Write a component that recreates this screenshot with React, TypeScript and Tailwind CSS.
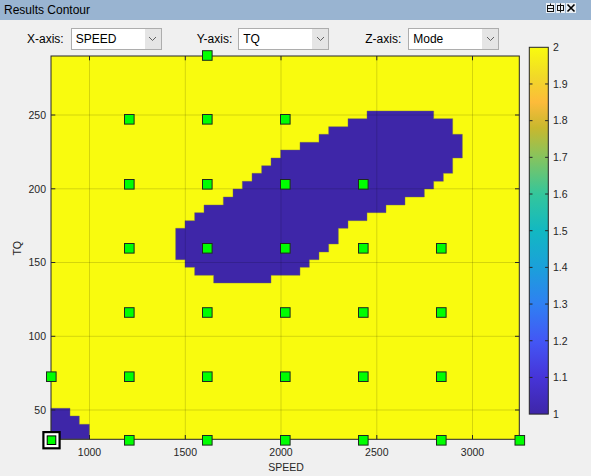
import React from 'react'

const FONT = 'Liberation Sans, Arial, sans-serif'

// blob outline, traced in 3x crop coords starting at (160,100)
const blobZoom: [number, number][] = [
  [621, 33], [821, 33], [821, 56], [878, 56], [878, 103], [907, 103], [907, 174], [878, 174],
  [878, 220], [850, 220], [850, 244], [821, 244], [821, 267], [793, 267], [793, 291], [735, 291],
  [735, 315], [678, 315], [678, 338], [621, 338], [621, 362], [564, 362], [564, 385], [535, 385],
  [535, 432], [506, 432], [506, 456], [477, 456], [477, 479], [448, 479], [448, 502], [420, 502],
  [420, 526], [333, 526], [333, 549], [161, 549], [161, 526], [104, 526], [104, 502], [75, 502],
  [75, 479], [47, 479], [47, 385], [75, 385], [75, 362], [104, 362], [104, 338], [132, 338],
  [132, 315], [190, 315], [190, 291], [219, 291], [219, 267], [247, 267], [247, 244], [276, 244],
  [276, 220], [305, 220], [305, 197], [333, 197], [333, 174], [362, 174], [362, 150], [420, 150],
  [420, 127], [477, 127], [477, 103], [506, 103], [506, 80], [564, 80], [564, 56], [621, 56],
]
const blobPoints = blobZoom.map(([x, y]) => `${160 + x / 3},${100 + y / 3}`).join(' ')
const cornerPoints = '51,408.3 70,408.3 70,416 79.3,416 79.3,424.3 89.3,424.3 89.3,439 51,439'

const xTicks = [
  { v: '1000', x: 89.5 },
  { v: '1500', x: 185.3 },
  { v: '2000', x: 281 },
  { v: '2500', x: 376.8 },
  { v: '3000', x: 472.5 },
]
const yTicks = [
  { v: '250', y: 115 },
  { v: '200', y: 188.8 },
  { v: '150', y: 262.5 },
  { v: '100', y: 336.3 },
  { v: '50', y: 410 },
]

const colX = [51.3, 129.3, 207.3, 285.3, 363.3, 441.3, 519.8]
const markers: [number, number][] = [
  [207.3, 55.5],
  [129.3, 119.3], [207.3, 119.3], [285.3, 119.3],
  [129.3, 184.3], [207.3, 184.3], [285.3, 184.3], [363.3, 184.3],
  ...[1, 2, 3, 4, 5].map((i) => [colX[i], 248.3] as [number, number]),
  ...[1, 2, 3, 4, 5].map((i) => [colX[i], 312.5] as [number, number]),
  ...[0, 1, 2, 3, 4, 5].map((i) => [colX[i], 376.7] as [number, number]),
  ...[1, 2, 3, 4, 5, 6].map((i) => [colX[i], 440.3] as [number, number]),
]

const cbLabels = ['2', '1.9', '1.8', '1.7', '1.6', '1.5', '1.4', '1.3', '1.2', '1.1', '1']

function Chevron() {
  return (
    <svg width="9" height="6" viewBox="0 0 9 6">
      <path d="M1 1 L4.5 4.5 L8 1" fill="none" stroke="#606060" strokeWidth="1" />
    </svg>
  )
}

function Combo({ value }: { value: string }) {
  return (
    <div className="w-[91px] h-[22px] bg-white border border-[#adadad] flex">
      <span className="flex-1 pl-[4px] leading-[20px]">{value}</span>
      <div className="w-[16px] bg-[#e5e5e5] flex items-center justify-center">
        <Chevron />
      </div>
    </div>
  )
}

function Plot() {
  return (
    <svg width="591" height="427" viewBox="0 49 591 427" fontFamily={FONT} className="overflow-visible shrink-0">
      <defs>
        <linearGradient id="parula" x1="0" y1="1" x2="0" y2="0">
          <stop offset="0" stopColor="#3e26a8" />
          <stop offset="0.1" stopColor="#4634d8" />
          <stop offset="0.2" stopColor="#4357f5" />
          <stop offset="0.3" stopColor="#2f80f2" />
          <stop offset="0.4" stopColor="#1ba0da" />
          <stop offset="0.5" stopColor="#12b8c2" />
          <stop offset="0.6" stopColor="#34c69b" />
          <stop offset="0.7" stopColor="#86c45e" />
          <stop offset="0.78" stopColor="#c8b82e" />
          <stop offset="0.85" stopColor="#fdbb3a" />
          <stop offset="0.92" stopColor="#f1d928" />
          <stop offset="1" stopColor="#f9fb0e" />
        </linearGradient>
      </defs>

      <rect x="51" y="56" width="468.3" height="383.3" fill="#f9fb0e" />
      <polygon points={blobPoints} fill="#3e26a8" stroke="#6e6a5a" strokeOpacity="0.55" strokeWidth="0.8" />
      <polygon points={cornerPoints} fill="#3e26a8" stroke="#6e6a5a" strokeOpacity="0.55" strokeWidth="0.8" />

      {xTicks.map((t) => (
        <line key={t.v} x1={t.x} y1="56" x2={t.x} y2="439.3" stroke="#000" strokeOpacity="0.15" />
      ))}
      {yTicks.map((t) => (
        <line key={t.v} x1="51" y1={t.y} x2="519.3" y2={t.y} stroke="#000" strokeOpacity="0.15" />
      ))}

      {/* tick marks */}
      {xTicks.map((t) => (
        <g key={t.v} stroke="#262626">
          <line x1={t.x} y1="439.3" x2={t.x} y2="435" />
          <line x1={t.x} y1="56" x2={t.x} y2="60.3" />
        </g>
      ))}
      {yTicks.map((t) => (
        <g key={t.v} stroke="#262626">
          <line x1="51" y1={t.y} x2="55.3" y2={t.y} />
          <line x1="519.3" y1={t.y} x2="515" y2={t.y} />
        </g>
      ))}

      <rect x="51" y="56" width="468.3" height="383.3" fill="none" stroke="#262626" strokeWidth="1" />

      {xTicks.map((t) => (
        <text key={t.v} x={t.x} y="455.8" fontSize="10.5" fill="#262626" textAnchor="middle">
          {t.v}
        </text>
      ))}
      {yTicks.map((t) => (
        <text key={t.v} x="46" y={t.y + 3.8} fontSize="10.5" fill="#262626" textAnchor="end">
          {t.v}
        </text>
      ))}

      <text x="286" y="471" fontSize="10.5" fill="#262626" textAnchor="middle">
        SPEED
      </text>
      <text x="21.5" y="248.3" fontSize="10.5" fill="#262626" textAnchor="middle" transform="rotate(-90 21.5 248.3)">
        TQ
      </text>

      {/* selected point */}
      <rect x="42.3" y="431" width="18.4" height="18.4" fill="#000" />
      <rect x="44.5" y="433.2" width="14" height="14" fill="#fff" />

      {markers.map(([x, y], i) => (
        <rect key={i} x={x - 4.8} y={y - 4.8} width="9.6" height="9.6" fill="#00ff00" stroke="#1e2a1e" strokeWidth="1" />
      ))}
      <rect x={51.5 - 4.3} y={440.2 - 4.3} width="8.6" height="8.6" fill="#00ff00" stroke="#000" strokeWidth="1" />

      {/* colorbar */}
      <rect x="529.3" y="47.3" width="19" height="366.8" fill="url(#parula)" stroke="#262626" strokeWidth="1" />
      {cbLabels.map((l, i) => {
        const y = 47.3 + i * 36.68
        return (
          <g key={l}>
            {i > 0 && i < 10 && (
              <g stroke="#262626">
                <line x1="529.3" y1={y} x2="532.5" y2={y} />
                <line x1="548.3" y1={y} x2="545.1" y2={y} />
              </g>
            )}
            <text x="553" y={y + 3.8} fontSize="10.5" fill="#262626">
              {l}
            </text>
          </g>
        )
      })}
    </svg>
  )
}

function TitleButtons() {
  return (
    <div className="flex gap-[1px] self-start mt-[3px]">
      <svg width="9" height="10" viewBox="0 0 9 10">
        <rect width="9" height="10" fill="#e9eef4" />
        <rect x="1.5" y="2.5" width="6" height="6" fill="none" stroke="#111" />
        <line x1="1.5" y1="5.5" x2="7.5" y2="5.5" stroke="#111" />
        <line x1="4.5" y1="0.5" x2="4.5" y2="2.5" stroke="#111" />
      </svg>
      <svg width="9" height="10" viewBox="0 0 9 10">
        <rect width="9" height="10" fill="#e9eef4" />
        <rect x="1.5" y="2.5" width="6" height="5" fill="none" stroke="#111" />
        <line x1="4.5" y1="0.5" x2="4.5" y2="9.5" stroke="#111" />
      </svg>
      <svg width="10" height="10" viewBox="0 0 10 10">
        <rect width="10" height="10" fill="#e9eef4" />
        <path d="M1.5 1.5 L8.5 8.5 M8.5 1.5 L1.5 8.5" stroke="#000" strokeWidth="1.6" />
      </svg>
    </div>
  )
}

export default function App() {
  return (
    <div className="w-[591px] h-[476px] overflow-hidden bg-[#f0f0f0] flex flex-col font-['Liberation_Sans',Arial,sans-serif] text-[12px] text-black">
      <div className="h-[20px] shrink-0 bg-[#99b4d1] flex items-center justify-between pl-[4px] pr-[15px]">
        <span className="leading-none">Results Contour</span>
        <TitleButtons />
      </div>
      <div className="h-[29px] shrink-0 pt-[8px] pl-[27px] flex items-start">
        <div className="flex items-center gap-[7px]">
          <span>X-axis:</span>
          <Combo value="SPEED" />
        </div>
        <div className="flex items-center gap-[6px] ml-[35px]">
          <span>Y-axis:</span>
          <Combo value="TQ" />
        </div>
        <div className="flex items-center gap-[7px] ml-[36px]">
          <span>Z-axis:</span>
          <Combo value="Mode" />
        </div>
      </div>
      <Plot />
    </div>
  )
}
